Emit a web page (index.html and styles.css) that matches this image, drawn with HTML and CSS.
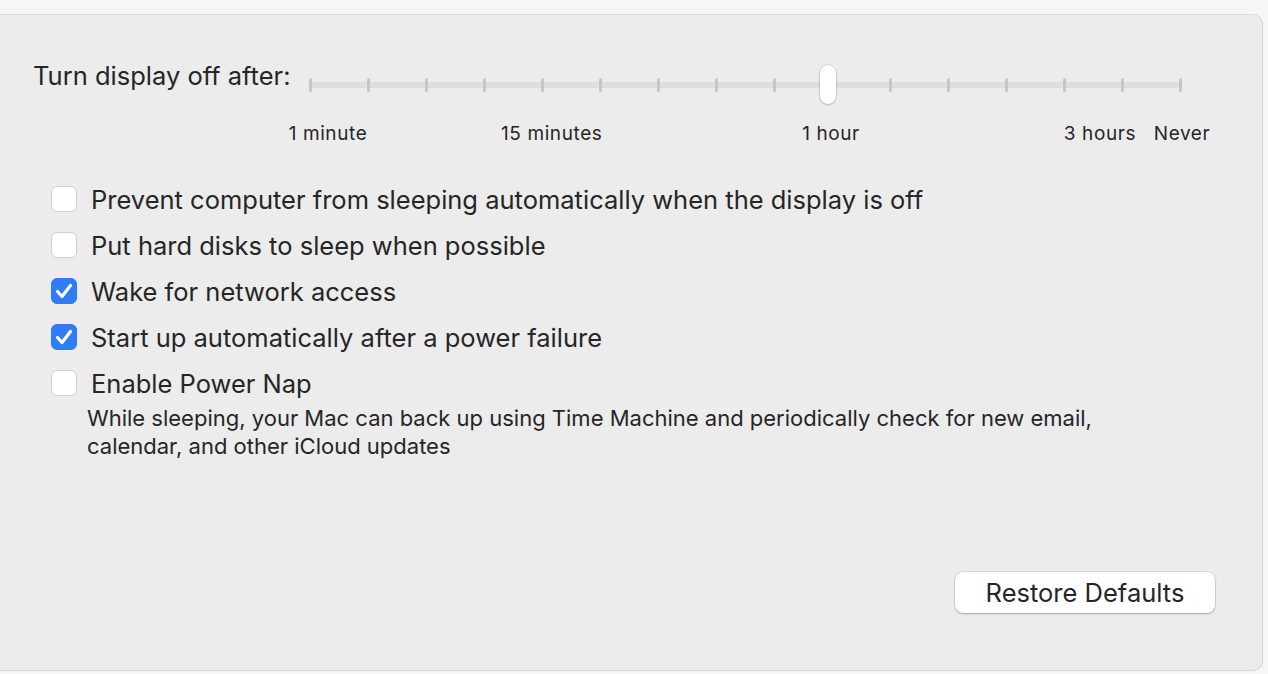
FILE: index.html
```html
<!DOCTYPE html>
<html lang="en">
<head>
  <meta charset="UTF-8" />
  <title>Energy Saver</title>
  <link rel="stylesheet" href="styles.css">
</head>
<body>
  <div class="panel">
    <div class="display-row">
      <div class="display-label">Turn display off after:</div>
      <div class="slider">
        <div class="track">
          <span class="tick"></span><span class="tick"></span><span class="tick"></span><span class="tick"></span>
          <span class="tick"></span><span class="tick"></span><span class="tick"></span><span class="tick"></span>
          <span class="tick"></span><span class="tick"></span><span class="tick"></span><span class="tick"></span>
          <span class="tick"></span><span class="tick"></span><span class="tick"></span><span class="tick"></span>
        </div>
        <div class="thumb"></div>
      </div>
    </div>

    <div class="scale">
      <span class="mark m1">1 minute</span>
      <span class="mark m15">15 minutes</span>
      <span class="mark m60">1 hour</span>
      <span class="mark m180">3 hours</span>
      <span class="mark never">Never</span>
    </div>

    <div class="options">
      <label class="option"><span class="box"></span>Prevent computer from sleeping automatically when the display is off</label>
      <label class="option"><span class="box"></span>Put hard disks to sleep when possible</label>
      <label class="option"><span class="box checked"><svg viewBox="0 0 26 26" width="26" height="26"><path d="M6.5 13.5 L11 18.5 L19.5 7.5" fill="none" stroke="#fff" stroke-width="3.2" stroke-linecap="round" stroke-linejoin="round"/></svg></span>Wake for network access</label>
      <label class="option"><span class="box checked"><svg viewBox="0 0 26 26" width="26" height="26"><path d="M6.5 13.5 L11 18.5 L19.5 7.5" fill="none" stroke="#fff" stroke-width="3.2" stroke-linecap="round" stroke-linejoin="round"/></svg></span>Start up automatically after a power failure</label>
      <label class="option"><span class="box"></span>Enable Power Nap</label>
      <p class="note">While sleeping, your Mac can back up using Time Machine and periodically check for new email,<br>calendar, and other iCloud updates</p>
    </div>

    <div class="footer">
      <button type="button" class="restore">Restore Defaults</button>
    </div>
  </div>
</body>
</html>
```

FILE: styles.css
```css
body {
  margin: 0;
  background: #f6f6f6;
  font-family: Inter, 'Liberation Sans', Arial, sans-serif;
  color: #262626;
}

.panel {
  margin-top: 14px;
  width: 1263px;
  height: 657px;
  background: #ececec;
  border-top: 1px solid #dcdcdc;
  border-right: 1px solid #d6d6d6;
  border-bottom: 1px solid #d6d6d6;
  border-radius: 0 10px 10px 0;
  box-sizing: border-box;
  padding: 47px 0 0 33px;
}

.display-row {
  display: flex;
  align-items: flex-start;
}

.display-label {
  font-size: 25.5px;
  line-height: 28px;
  width: 276px;
  white-space: nowrap;
}

.slider {
  position: relative;
  width: 873px;
  height: 44px;
}

.track {
  margin-top: 20px;
  height: 6px;
  background: #dedede;
  border-radius: 3px;
  display: flex;
  justify-content: space-between;
  align-items: center;
}

.tick {
  width: 3px;
  height: 14px;
  background: #c6c6c6;
  border-radius: 1.5px;
}

.thumb {
  position: absolute;
  left: 511px;
  top: 3px;
  width: 16px;
  height: 39px;
  background: #fff;
  border-radius: 8px;
  box-shadow: 0 0 0 0.5px rgba(0, 0, 0, 0.18), 0 1px 2px rgba(0, 0, 0, 0.2);
}

.scale {
  display: flex;
  font-size: 19px;
  letter-spacing: 0.6px;
  line-height: 22px;
  margin-top: 17px;
}

.mark {
  display: block;
  text-align: center;
  width: 100px;
  white-space: nowrap;
}

.m1 { margin-left: 245px; }
.m15 { margin-left: 123px; }
.m60 { margin-left: 180px; }
.m180 { margin-left: 179px; width: 80px; }
.never { margin-left: 2px; width: 80px; }

.options {
  margin-top: 31px;
  padding-left: 18px;
}

.option {
  display: flex;
  align-items: center;
  gap: 14px;
  height: 46px;
  font-size: 25.5px;
}

.box {
  width: 26px;
  height: 26px;
  box-sizing: border-box;
  background: #fff;
  border: 1px solid #cfcfcf;
  border-radius: 6px;
  flex-shrink: 0;
}

.box.checked {
  background: #2f7cf6;
  border-color: #2f7cf6;
}

.box svg {
  display: block;
  margin: -1px;
}

.note {
  margin: -2px 0 0 36px;
  font-size: 22px;
  line-height: 28px;
}

.footer {
  display: flex;
  justify-content: flex-end;
  padding-right: 47px;
  margin-top: 112px;
}

.restore {
  width: 260px;
  height: 41px;
  background: #fff;
  border: none;
  border-radius: 8px;
  font-family: inherit;
  font-size: 25.5px;
  color: #262626;
  box-shadow: 0 0 0 0.5px rgba(0, 0, 0, 0.15), 0 1px 2px rgba(0, 0, 0, 0.25);
}
```
